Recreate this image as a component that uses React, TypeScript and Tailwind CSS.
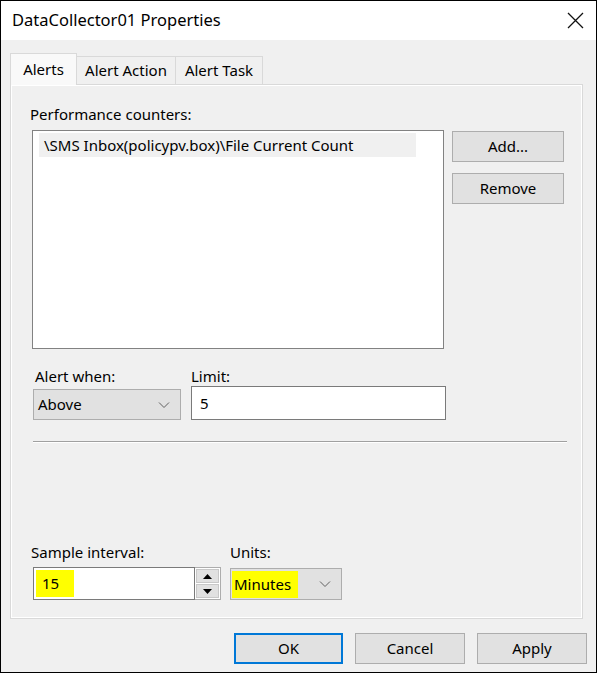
import React from "react";

function Chevron() {
  return (
    <svg width="12" height="8" viewBox="0 0 12 8" className="shrink-0">
      <path d="M1 1.5 L6 6.5 L11 1.5" fill="none" stroke="#606060" strokeWidth="1" />
    </svg>
  );
}

function Button({ label, w, focused }: { label: string; w: string; focused?: boolean }) {
  return (
    <div
      className={`${w} h-[31px] flex items-center justify-center bg-[#e1e1e1] text-[15px] text-black ${
        focused ? "border-2 border-[#0078d7]" : "border border-[#adadad]"
      }`}
    >
      {label}
    </div>
  );
}

export default function App() {
  return (
    <div
      className="w-[597px] h-[673px] border border-black bg-[#f0f0f0] flex flex-col text-black"
      style={{ fontFamily: '"Noto Sans", "Liberation Sans", sans-serif' }}
    >
      {/* title bar */}
      <div className="h-[39px] bg-white flex items-center justify-between pl-[11px] pr-[12px] shrink-0">
        <span className="text-[16.5px]">DataCollector01 Properties</span>
        <svg width="17" height="17" viewBox="0 0 17 17">
          <path d="M1 1 L16 16 M16 1 L1 16" stroke="#111" strokeWidth="1.3" />
        </svg>
      </div>

      <div className="flex-1 flex flex-col pl-[9px] pr-[13px]">
        {/* tabs */}
        <div className="flex items-end mt-[12px] h-[32px] relative z-10">
          <div className="w-[67px] h-[32px] border border-b-0 border-[#d9d9d9] bg-[#f9f9f9] flex items-center justify-center text-[15px] mb-[-1px]">
            Alerts
          </div>
          <div className="w-[99px] h-[28px] border border-l-0 border-b-0 border-[#d9d9d9] bg-[#f0f0f0] flex items-center justify-center text-[15px]">
            Alert Action
          </div>
          <div className="w-[87px] h-[28px] border border-l-0 border-b-0 border-[#d9d9d9] bg-[#f0f0f0] flex items-center justify-center text-[15px]">
            Alert Task
          </div>
        </div>

        {/* tab page */}
        <div className="h-[535px] border border-[#d9d9d9] bg-[#f0f0f0] flex flex-col">
          <div className="flex-1 border border-white flex flex-col pl-[20px] pr-[16px]">
            <div className="text-[15px] mt-[18px] leading-[20px] ml-[-2px]">Performance counters:</div>
            <div className="flex mt-[6px] gap-[8px]">
              <div className="w-[412px] h-[219px] border border-[#828282] bg-white pl-[6px] pt-[2px]">
                <div className="w-[377px] h-[24px] bg-[#f0f0f0] flex items-center pl-[5px] text-[15px]">
                  \SMS Inbox(policypv.box)\File Current Count
                </div>
              </div>
              <div className="flex flex-col gap-[11px] pt-[1px]">
                <Button label="Add..." w="w-[112px]" />
                <Button label="Remove" w="w-[112px]" />
              </div>
            </div>

            <div className="flex mt-[17px] gap-[10px] pl-[1px]">
              <div className="flex flex-col">
                <div className="text-[15px] leading-[20px] pl-[2px]">Alert when:</div>
                <div className="w-[148px] h-[31px] mt-[3px] border border-[#adadad] bg-[#e1e1e1] flex items-center justify-between pl-[4px] pr-[10px] text-[15px]">
                  <span>Above</span>
                  <Chevron />
                </div>
              </div>
              <div className="flex flex-col">
                <div className="text-[15px] leading-[20px]">Limit:</div>
                <div className="w-[255px] h-[34px] border border-[#7a7a7a] bg-white flex items-center pl-[8px] text-[15px]">
                  5
                </div>
              </div>
            </div>

            <div className="mt-[21px] ml-[1px] w-[534px] h-[2px] border-t border-[#a0a0a0] border-b border-b-white" />

            <div className="flex mt-[99px] gap-[9px] pl-[1px]">
              <div className="flex flex-col">
                <div className="text-[15px] leading-[20px] ml-[-2px]">Sample interval:</div>
                <div className="flex mt-[5px]">
                  <div className="w-[162px] h-[33px] border border-[#7a7a7a] bg-white flex items-center pl-[2px]">
                    <span className="bg-[#ffff00] h-[27px] w-[38px] flex items-center pl-[6px] text-[15px]">15</span>
                  </div>
                  <div className="w-[26px] h-[33px] flex flex-col border border-l-0 border-[#adadad] bg-white">
                    <div className="flex-1 m-[1px] mb-0 bg-[#e1e1e1] border border-[#c8c8c8] flex items-center justify-center">
                      <svg width="9" height="5" viewBox="0 0 9 5"><path d="M0 5 L4.5 0 L9 5 Z" fill="#000" /></svg>
                    </div>
                    <div className="flex-1 m-[1px] bg-[#e1e1e1] border border-[#c8c8c8] flex items-center justify-center">
                      <svg width="9" height="5" viewBox="0 0 9 5"><path d="M0 0 L4.5 5 L9 0 Z" fill="#000" /></svg>
                    </div>
                  </div>
                </div>
              </div>
              <div className="flex flex-col">
                <div className="text-[15px] leading-[20px]">Units:</div>
                <div className="w-[112px] h-[32px] mt-[6px] border border-[#adadad] bg-[#e1e1e1] flex items-center justify-between pl-[1px] pr-[10px]">
                  <span className="bg-[#ffff00] h-[27px] w-[66px] flex items-center pl-[2px] text-[15px]">Minutes</span>
                  <Chevron />
                </div>
              </div>
            </div>
          </div>
        </div>

        {/* dialog buttons */}
        <div className="flex justify-end gap-[12px] mt-[14px] mr-[-4px]">
          <Button label="OK" w="w-[109px]" focused />
          <Button label="Cancel" w="w-[110px]" />
          <Button label="Apply" w="w-[110px]" />
        </div>
      </div>
    </div>
  );
}
